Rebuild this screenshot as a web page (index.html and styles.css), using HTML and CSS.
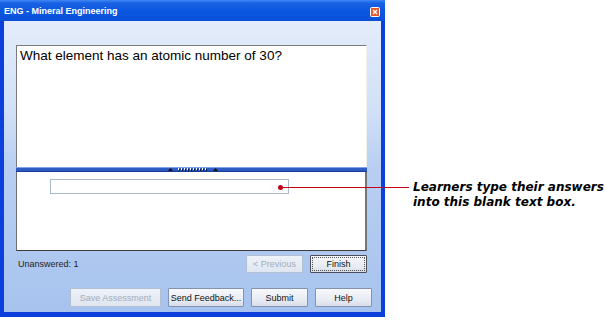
FILE: index.html
```html
<!DOCTYPE html>
<html lang="en">
<head>
    <meta charset="UTF-8">
    <title>ENG - Mineral Engineering</title>
    <link rel="stylesheet" href="styles.css">
</head>
<body>
    <div class="window">
        <div class="titlebar">
            <span class="title">ENG - Mineral Engineering</span>
            <svg class="close" width="10" height="10" viewBox="0 0 10 10">
                <rect x="0.5" y="0.5" width="9" height="9" rx="1" fill="#e2592e" stroke="#fff"/>
                <path d="M3 3 L7 7 M7 3 L3 7" stroke="#fff" stroke-width="1.4"/>
            </svg>
        </div>
        <div class="frame">
            <div class="client">
                <div class="question">What element has an atomic number of 30?</div>
                <div class="splitter">
                    <svg class="grip" width="54" height="5" viewBox="0 0 54 5">
                        <path d="M2 4 L4.5 1 L7 4 Z" fill="#111"/>
                        <g fill="#fff">
                            <rect x="12" y="1" width="1" height="2"/><rect x="15" y="1" width="1" height="2"/>
                            <rect x="18" y="1" width="1" height="2"/><rect x="21" y="1" width="1" height="2"/>
                            <rect x="24" y="1" width="1" height="2"/><rect x="27" y="1" width="1" height="2"/>
                            <rect x="30" y="1" width="1" height="2"/><rect x="33" y="1" width="1" height="2"/>
                            <rect x="36" y="1" width="1" height="2"/><rect x="39" y="1" width="1" height="2"/>
                        </g>
                        <g fill="#0a1a40">
                            <rect x="13" y="2" width="1" height="2"/><rect x="16" y="2" width="1" height="2"/>
                            <rect x="19" y="2" width="1" height="2"/><rect x="22" y="2" width="1" height="2"/>
                            <rect x="25" y="2" width="1" height="2"/><rect x="28" y="2" width="1" height="2"/>
                            <rect x="31" y="2" width="1" height="2"/><rect x="34" y="2" width="1" height="2"/>
                            <rect x="37" y="2" width="1" height="2"/><rect x="40" y="2" width="1" height="2"/>
                        </g>
                        <path d="M47 4 L49.5 1 L52 4 Z" fill="#111"/>
                    </svg>
                </div>
                <div class="answer">
                    <input class="answer-input" type="text">
                </div>
                <div class="status">
                    <span class="unanswered">Unanswered: 1</span>
                    <div class="nav">
                        <button class="btn" disabled>&lt; Previous</button>
                        <button class="btn btn-default"><span class="focus">Finish</span></button>
                    </div>
                </div>
                <div class="actions">
                    <button class="btn btn-save" disabled>Save Assessment</button>
                    <button class="btn btn-feedback">Send Feedback...</button>
                    <button class="btn">Submit</button>
                    <button class="btn">Help</button>
                </div>
            </div>
        </div>
    </div>

    <div class="callout">
        <span class="dot"></span>
        <span class="line"></span>
        <p class="note">Learners type their answers<br>into this blank text box.</p>
    </div>
</body>
</html>
```

FILE: styles.css
```css
:root {
    --frame-blue: #0b40dc;
    --ui-font: "Liberation Sans", Arial, sans-serif;
}

body {
    margin: 0;
    width: 606px;
    height: 320px;
    position: relative;
    overflow: hidden;
    background-color: #fff;
    font-family: var(--ui-font);
}

.window {
    width: 385px;
}

.titlebar {
    height: 21px;
    display: flex;
    align-items: flex-start;
    justify-content: space-between;
    background: linear-gradient(#3d88f4 0, #1a62e4 3px, #0c58e2 50%, #0a4fd8 100%);
}

.title {
    padding: 6px 0 0 4px;
    color: #fff;
    font-size: 9px;
    font-weight: bold;
    line-height: 11px;
}

.close {
    margin: 7px 5px 0 0;
}

.frame {
    border: 4px solid var(--frame-blue);
    border-top: 0;
    border-bottom-width: 5px;
}

.client {
    height: 291px;
    box-sizing: border-box;
    padding: 24px 14px 0 12px;
    display: flex;
    flex-direction: column;
    background: linear-gradient(#e3ecfa 0, #d2e1f7 30%, #b8cff2 50%, #a7c3ee 100%);
}

.question {
    height: 122px;
    padding: 2px 3px;
    box-sizing: border-box;
    background-color: #fff;
    border-top: 1px solid #7a7a7a;
    border-left: 1px solid #7a7a7a;
    border-right: 1px solid #f2f2ea;
    font-size: 13.5px;
    line-height: 16px;
    color: #000;
}

.splitter {
    height: 5px;
    display: flex;
    justify-content: center;
    background: linear-gradient(#7ea4e8 0, #7ea4e8 1px, #2f5fc6 1px, #2a58bd 4px, #173d98 4px);
}

.grip {
    margin-left: 2px;
}

.answer {
    height: 79px;
    padding: 7px 0 0 33px;
    box-sizing: border-box;
    background-color: #fff;
    border-left: 1px solid #6e6e6e;
    border-right: 2px solid #757575;
    border-bottom: 1px solid #3c3c3c;
}

.answer-input {
    display: block;
    width: 239px;
    height: 15px;
    box-sizing: border-box;
    margin: 0;
    padding: 0;
    border: 1px solid #a9bad0;
    background-color: #fff;
}

.status {
    margin-top: 4px;
    display: flex;
    align-items: center;
    justify-content: space-between;
}

.unanswered {
    padding-left: 2px;
    font-size: 9px;
    color: #1e1e1e;
}

.nav {
    display: flex;
    gap: 7px;
}

.actions {
    margin: 15px -5px 0 0;
    display: flex;
    justify-content: flex-end;
    gap: 7px;
}

.btn {
    width: 57px;
    height: 18px;
    margin: 0;
    padding: 0;
    font-family: var(--ui-font);
    font-size: 9px;
    color: #111;
    background: linear-gradient(#f7f8fb, #e6eaf2 70%, #d6dce8);
    border: 1px solid #8493ad;
    border-radius: 1px;
}

.actions .btn {
    height: 19px;
}

.btn:disabled {
    color: #a3abbb;
    border-color: #b3bfd3;
    background: linear-gradient(#eef2f9, #dfe6f1);
}

.btn-default {
    border-color: #4a4f58;
    padding: 1px;
}

.btn-default .focus {
    display: flex;
    align-items: center;
    justify-content: center;
    height: 100%;
    box-sizing: border-box;
    border: 1px dotted #555;
}

.btn-save {
    width: 91px;
}

.btn-feedback {
    width: 76px;
}

.callout {
    position: absolute;
    left: 278px;
    top: 180px;
    display: flex;
    align-items: flex-start;
}

.dot {
    width: 5px;
    height: 5px;
    margin-top: 5px;
    border-radius: 50%;
    background-color: #c4001a;
}

.line {
    width: 126px;
    height: 1px;
    margin-top: 7px;
    background-color: #c4001a;
}

.note {
    margin: 0 0 0 4px;
    font-family: "DejaVu Sans", Verdana, sans-serif;
    font-size: 12px;
    font-weight: bold;
    font-style: italic;
    line-height: 15px;
    color: #000;
    white-space: nowrap;
}
```
